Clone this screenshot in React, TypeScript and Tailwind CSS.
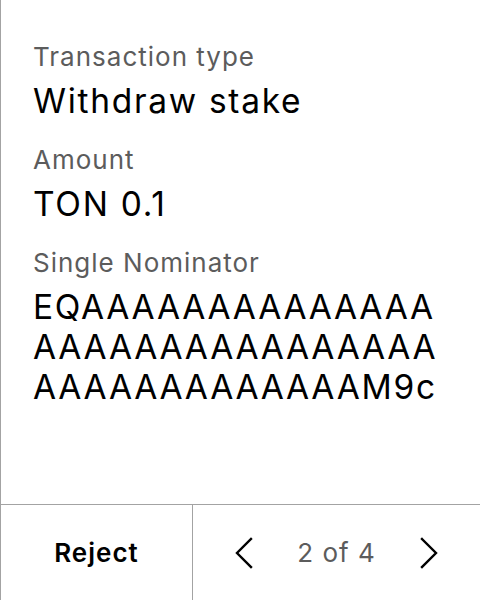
import React from "react";

type Field = {
  label: string;
  value: string;
  mono?: boolean;
};

const fields: Field[] = [
  { label: "Transaction type", value: "Withdraw stake" },
  { label: "Amount", value: "TON 0.1" },
  {
    label: "Single Nominator",
    value: "EQAAAAAAAAAAAAAAAAAAAAAAAAAAAAAAAAAAAAAAAAAAAM9c",
    mono: true,
  },
];

function ChevronLeft() {
  return (
    <svg width="18" height="32" viewBox="0 0 18 32" fill="none">
      <path
        d="M16 2 L2 16 L16 30"
        stroke="#000"
        strokeWidth="2.4"
        strokeLinecap="square"
      />
    </svg>
  );
}

function ChevronRight() {
  return (
    <svg width="18" height="32" viewBox="0 0 18 32" fill="none">
      <path
        d="M2 2 L16 16 L2 30"
        stroke="#000"
        strokeWidth="2.4"
        strokeLinecap="square"
      />
    </svg>
  );
}

export default function App() {
  return (
    <div
      className="flex h-[600px] w-[480px] flex-col border-l border-[#a3a3a3] bg-white text-black"
      style={{ fontFamily: "Inter, 'Noto Sans', sans-serif" }}
    >
      <div className="flex flex-1 flex-col gap-[23px] px-[32px] pt-[41px]">
        {fields.map((field) => (
          <div key={field.label} className="flex flex-col">
            <span className="text-[26px] leading-[32px] tracking-[1px] text-[#5c5c5c]">
              {field.label}
            </span>
            <span
              className={[
                "mt-[8px] text-[33.5px] leading-[40px] tracking-[1.7px]",
                field.mono ? "w-[415px] break-all" : "",
              ].join(" ")}
            >
              {field.value}
            </span>
          </div>
        ))}
      </div>

      <div className="flex h-[96px] border-t border-[#a3a3a3]">
        <button className="flex w-[192px] items-center justify-center border-r border-[#a3a3a3] text-[26px] font-semibold tracking-[1px]">
          Reject
        </button>
        <div className="flex flex-1 items-center justify-between px-[42px]">
          <button className="flex items-center">
            <ChevronLeft />
          </button>
          <span className="text-[26px] tracking-[1px] text-[#5c5c5c]">
            2 of 4
          </span>
          <button className="flex items-center">
            <ChevronRight />
          </button>
        </div>
      </div>
    </div>
  );
}
